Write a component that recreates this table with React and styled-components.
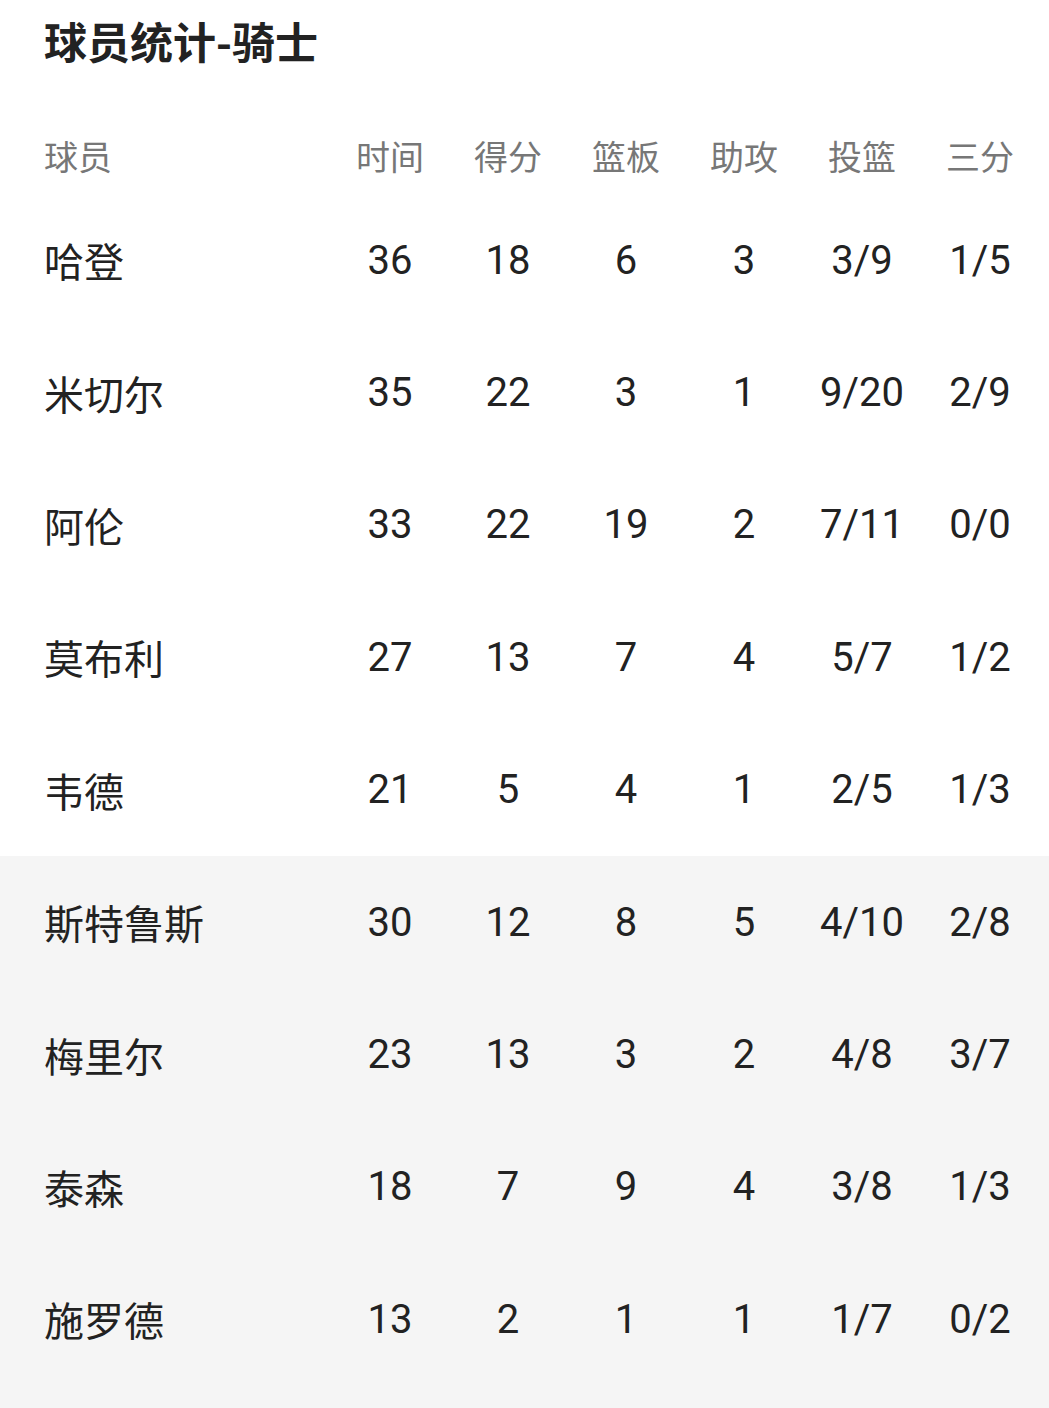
import React from "react";
import styled, { createGlobalStyle } from "styled-components";

const GlobalStyle = createGlobalStyle`
  html, body { margin: 0; padding: 0; background: #ffffff; }
  body {
    font-family: Roboto, "Noto Sans CJK SC", "Noto Sans", sans-serif;
    color: #222222;
    overflow-x: hidden;
  }
  * { box-sizing: border-box; }
`;

const Page = styled.div`
  width: 1049px;
  min-height: 1408px;
  overflow: hidden;
  background: linear-gradient(#ffffff 0 857px, #f5f5f5 857px);
`;

const Title = styled.h1`
  margin: 0;
  padding-left: 44px;
  height: 80px;
  line-height: 80px;
  font-size: 43px;
  font-weight: 700;
  color: #222222;
  font-family: "Noto Sans CJK SC", sans-serif;
`;

const Table = styled.div`
  margin-top: 40px;
  display: flex;
  flex-direction: column;
`;

const Row = styled.div`
  display: grid;
  grid-template-columns: 331px repeat(6, 118px);
  align-items: center;
  height: ${(p) => (p.$header ? "74px" : "132.4px")};
  padding-bottom: ${(p) => (p.$header ? "4px" : "0")};
  background: ${(p) => (p.$bench ? "#f5f5f5" : "transparent")};
  color: ${(p) => (p.$header ? "#777777" : "#222222")};
  font-size: ${(p) => (p.$header ? "34px" : "40px")};
`;

const NameCell = styled.div`
  padding-left: 44px;
  font-family: "Noto Sans CJK SC", sans-serif;
  white-space: nowrap;
`;

const Cell = styled.div`
  text-align: center;
  white-space: nowrap;
  font-family: ${(p) =>
    p.$cjk ? '"Noto Sans CJK SC", sans-serif' : 'Roboto, "Noto Sans CJK SC", sans-serif'};
`;

const headers = ["时间", "得分", "篮板", "助攻", "投篮", "三分"];

const players = [
  ["哈登", "36", "18", "6", "3", "3/9", "1/5"],
  ["米切尔", "35", "22", "3", "1", "9/20", "2/9"],
  ["阿伦", "33", "22", "19", "2", "7/11", "0/0"],
  ["莫布利", "27", "13", "7", "4", "5/7", "1/2"],
  ["韦德", "21", "5", "4", "1", "2/5", "1/3"],
  ["斯特鲁斯", "30", "12", "8", "5", "4/10", "2/8"],
  ["梅里尔", "23", "13", "3", "2", "4/8", "3/7"],
  ["泰森", "18", "7", "9", "4", "3/8", "1/3"],
  ["施罗德", "13", "2", "1", "1", "1/7", "0/2"],
];

export default function App() {
  return (
    <>
      <GlobalStyle />
      <Page>
        <Title>球员统计-骑士</Title>
        <Table>
          <Row $header>
            <NameCell>球员</NameCell>
            {headers.map((h) => (
              <Cell key={h} $cjk>
                {h}
              </Cell>
            ))}
          </Row>
          {players.map(([name, ...stats], i) => (
            <Row key={name} $bench={i >= 5}>
              <NameCell>{name}</NameCell>
              {stats.map((s, j) => (
                <Cell key={j}>{s}</Cell>
              ))}
            </Row>
          ))}
        </Table>
      </Page>
    </>
  );
}
